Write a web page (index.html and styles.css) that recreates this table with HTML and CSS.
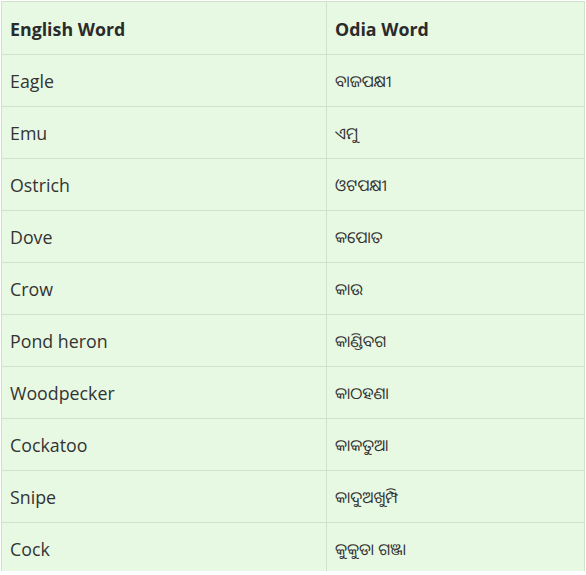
FILE: index.html
```html
<!DOCTYPE html>
<html lang="en">
<head>
<meta charset="utf-8">
<title>Birds in Odia</title>
<link rel="stylesheet" href="styles.css">
</head>
<body>
<div class="frame">
<table class="words">
  <thead>
    <tr><th>English Word</th><th>Odia Word</th></tr>
  </thead>
  <tbody>
    <tr><td>Eagle</td><td class="or">ବାଜପକ୍ଷୀ</td></tr>
    <tr><td>Emu</td><td class="or">ଏମୁ</td></tr>
    <tr><td>Ostrich</td><td class="or">ଓଟପକ୍ଷୀ</td></tr>
    <tr><td>Dove</td><td class="or">କପୋତ</td></tr>
    <tr><td>Crow</td><td class="or">କାଉ</td></tr>
    <tr><td>Pond heron</td><td class="or">କାଣ୍ଡିବଗ</td></tr>
    <tr><td>Woodpecker</td><td class="or">କାଠହଣା</td></tr>
    <tr><td>Cockatoo</td><td class="or">କାକତୁଆ</td></tr>
    <tr><td>Snipe</td><td class="or">କାଦୁଅଖୁମ୍ପି</td></tr>
    <tr class="last"><td>Cock</td><td class="or">କୁକୁଡା ଗଞ୍ଜା</td></tr>
  </tbody>
</table>
</div>
</body>
</html>
```

FILE: styles.css
```css
html, body {
  margin: 0;
  padding: 0;
  background: #ffffff;
}

.frame {
  height: 571px;
  overflow: hidden;
  padding: 1px 0 0 1px;
  box-sizing: border-box;
}

.words {
  border-collapse: collapse;
  width: 584px;
  background: #e8f9e3;
  font-family: "Open Sans", "Noto Sans", sans-serif;
  font-size: 17.8px;
  color: #333333;
  table-layout: fixed;
}

.words th,
.words td {
  border: 1px solid #cfe3cc;
  height: 52px;
  padding: 0 8px;
  text-align: left;
  vertical-align: middle;
  box-sizing: border-box;
}

.words th {
  font-weight: 700;
  color: #2b2b2b;
  height: 53px;
  padding-top: 2px;
}

.words th:first-child,
.words td:first-child {
  width: 325px;
}

.words .last td {
  border-bottom: none;
}

.words td.or {
  font-family: "Noto Sans Oriya", "Lohit Odia", "Noto Sans", sans-serif;
  font-size: 16px;
}
```
